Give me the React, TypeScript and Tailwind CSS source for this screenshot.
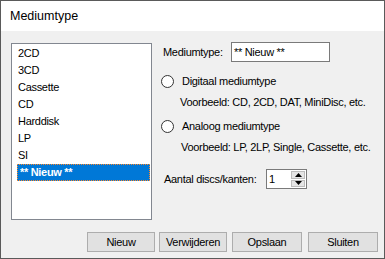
import React from "react";

const items = ["2CD", "3CD", "Cassette", "CD", "Harddisk", "LP", "SI", "** Nieuw **"];

function Radio({ label }: { label: string }) {
  return (
    <div className="flex items-center h-[16px]">
      <div className="w-[13px] h-[13px] rounded-full border border-[#333333] bg-white shrink-0" />
      <span className="ml-[8px]">{label}</span>
    </div>
  );
}

function Btn({ label, w, ml }: { label: string; w: string; ml: string }) {
  return (
    <div
      className={`${w} ${ml} h-[20px] border border-[#adadad] bg-[#e1e1e1] flex items-center justify-center`}
    >
      {label}
    </div>
  );
}

export default function App() {
  return (
    <div
      className="w-[385px] h-[259px] border border-[#5a5a5a] flex flex-col text-[11px] tracking-[-0.3px] text-black leading-none whitespace-nowrap"
      style={{ fontFamily: '"Liberation Sans", Arial, sans-serif' }}
    >
      <div className="h-[30px] bg-white flex items-center pl-[9px] text-[12.5px] tracking-normal shrink-0">Mediumtype</div>
      <div className="flex-1 bg-[#f0f0f0] flex flex-col">
        <div className="flex items-start">
          <div className="mt-[12px] ml-[10px] w-[141px] h-[177px] border border-[#828790] bg-white pt-[1px] shrink-0">
            {items.map((it, i) =>
              i === items.length - 1 ? (
                <div
                  key={it}
                  className="h-[17px] ml-[5px] mr-[1px] bg-[#0078d7] text-white font-bold flex items-center pl-[2px] border border-dotted border-[#ff8728]"
                >
                  {it}
                </div>
              ) : (
                <div key={it} className="h-[17px] flex items-center pl-[6px]">
                  {it}
                </div>
              )
            )}
          </div>
          <div className="mt-[11px] ml-[9px] flex flex-col w-[220px]">
            <div className="flex items-center h-[20px]">
              <span className="ml-[2px] w-[68px]">Mediumtype:</span>
              <div className="w-[99px] h-[20px] border border-[#7a7a7a] bg-white flex items-center pl-[2px]">
                ** Nieuw **
              </div>
            </div>
            <div className="mt-[11px]">
              <Radio label="Digitaal mediumtype" />
            </div>
            <div className="mt-[5px] h-[16px] flex items-center pl-[19px]">
              Voorbeeld: CD, 2CD, DAT, MiniDisc, etc.
            </div>
            <div className="mt-[8px]">
              <Radio label="Analoog mediumtype" />
            </div>
            <div className="mt-[5px] h-[16px] flex items-center pl-[20px]">
              Voorbeeld: LP, 2LP, Single, Cassette, etc.
            </div>
            <div className="mt-[14px] flex items-center h-[20px]">
              <span className="ml-[3px] w-[102px]">Aantal discs/kanten:</span>
              <div className="w-[41px] h-[20px] border border-[#7a7a7a] bg-white flex">
                <div className="flex-1 flex items-center pl-[2px]">1</div>
                <div className="w-[16px] flex flex-col p-[1px] gap-[1px]">
                  <div className="flex-1 bg-[#e5e5e5] border border-[#bcbcbc] flex items-center justify-center">
                    <svg width="7" height="4" viewBox="0 0 7 4"><path d="M0 4 L3.5 0 L7 4 Z" fill="#000" /></svg>
                  </div>
                  <div className="flex-1 bg-[#e5e5e5] border border-[#bcbcbc] flex items-center justify-center">
                    <svg width="7" height="4" viewBox="0 0 7 4"><path d="M0 0 L3.5 4 L7 0 Z" fill="#000" /></svg>
                  </div>
                </div>
              </div>
            </div>
          </div>
        </div>
        <div className="mt-[12px] flex">
          <Btn label="Nieuw" w="w-[68px]" ml="ml-[86px]" />
          <Btn label="Verwijderen" w="w-[68px]" ml="ml-[4px]" />
          <Btn label="Opslaan" w="w-[70px]" ml="ml-[5px]" />
          <Btn label="Sluiten" w="w-[70px]" ml="ml-[6px]" />
        </div>
      </div>
    </div>
  );
}
